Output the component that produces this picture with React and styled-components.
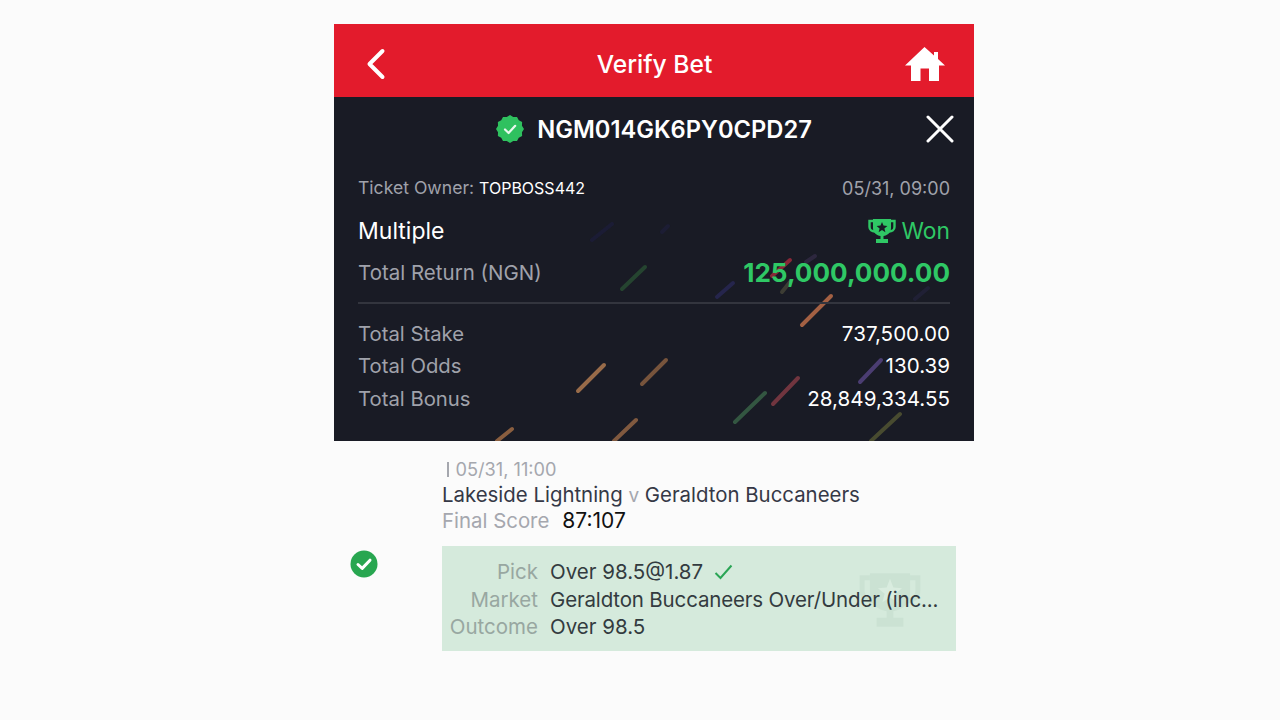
import styled, { createGlobalStyle } from 'styled-components';

const GlobalStyle = createGlobalStyle`
  html, body {
    margin: 0;
    height: 100%;
    background: #fbfbfb;
    font-family: Inter, "Liberation Sans", sans-serif;
  }
`;

const Page = styled.div`
  width: 640px;
  margin-left: 334px;
  padding-top: 24px;
`;

const TopBar = styled.header`
  height: 73px;
  box-sizing: border-box;
  background: #e31b2c;
  display: flex;
  align-items: center;
  justify-content: space-between;
  padding: 7px 29px 0 30px;
  color: #fff;
`;

const TopTitle = styled.h1`
  margin: 0;
  font-size: 24.6px;
  font-weight: 500;
`;

const IconSlot = styled.div`
  width: 42px;
  display: flex;
  justify-content: ${p => p.$end ? 'flex-end' : 'flex-start'};
`;

const Panel = styled.section`
  position: relative;
  overflow: hidden;
  height: 344px;
  background: #191b25;
  box-sizing: border-box;
  padding: 0 24px;
  color: #fff;
`;

const Streaks = styled.svg`
  position: absolute;
  left: 0;
  top: 0;
  filter: blur(0.7px);
`;

const PanelBody = styled.div`
  position: relative;
`;

const CodeRow = styled.div`
  height: 66px;
  box-sizing: border-box;
  padding-bottom: 2px;
  display: flex;
  align-items: center;
  justify-content: center;
  gap: 13px;
  font-size: 23.7px;
  font-weight: 600;
`;

const CloseBtn = styled.div`
  position: absolute;
  right: -4px;
  top: 18px;
`;

const Row = styled.div`
  display: flex;
  justify-content: space-between;
  align-items: center;
  height: ${p => p.$h || 32.5}px;
`;

const OwnerLine = styled.span`
  display: flex;
  align-items: baseline;
  gap: 5px;
  margin-top: -1px;
`;

const Muted = styled.span`
  color: #a0a2ab;
  font-size: ${p => p.$size || 20.3}px;
`;

const Value = styled.span`
  color: #fff;
  font-size: ${p => p.$size || 20.6}px;
`;

const Won = styled.span`
  display: flex;
  align-items: center;
  gap: 6px;
  color: #2fc865;
  font-size: 22.8px;
  margin-top: -1px;
`;

const BigAmount = styled.span`
  color: #2fc865;
  font-size: 26.1px;
  font-weight: 700;
`;

const Divider = styled.div`
  height: 2px;
  background: #33353e;
  margin: 7px 0 13px;
`;

const BetRow = styled.div`
  display: flex;
  padding: 18px 18px 0 16px;
`;

const StatusCol = styled.div`
  width: 92px;
  padding-top: 91px;
`;

const BetCol = styled.div`
  flex: 1;
  min-width: 0;
`;

const DateLine = styled.div`
  color: #a5a7ae;
  font-size: 18.2px;
  line-height: 21px;
  padding-left: 5px;
  display: flex;
  align-items: center;
  gap: 7px;
`;

const DateBar = styled.span`
  width: 1.5px;
  height: 15px;
  background: #a5a7ae;
`;

const Teams = styled.div`
  color: #353846;
  font-size: 20.4px;
  line-height: 29px;
  white-space: nowrap;
`;

const Versus = styled.span`
  color: #a5a7ae;
  font-size: 19px;
`;

const ScoreLine = styled.div`
  display: flex;
  gap: 13px;
  font-size: 20.4px;
  line-height: 21px;
  margin-bottom: 15px;
`;

const ScoreLabel = styled.span`
  color: #a5a7ae;
`;

const Score = styled.span`
  color: #111;
  font-size: 21px;
`;

const PickBox = styled.div`
  position: relative;
  height: 105px;
  box-sizing: border-box;
  background: #d5eadc;
  padding: 12px 16px 0 0;
  display: grid;
  grid-template-columns: 96px minmax(0, 1fr);
  column-gap: 12px;
  grid-auto-rows: 27.5px;
  align-items: center;
  font-size: 20.5px;
`;

const PickLabel = styled.span`
  color: #98a7a1;
  text-align: right;
`;

const PickValue = styled.span`
  position: relative;
  color: #333b3f;
  display: flex;
  align-items: center;
  gap: 11px;
  white-space: nowrap;
  letter-spacing: ${p => p.$tight ? '-0.16px' : '0'};
`;

const Watermark = styled.svg`
  position: absolute;
  left: 414px;
  top: 25px;
`;

const streaks = [
  [578, 391, 604, 365, '#c98a58', 0.72],
  [642, 384, 666, 360, '#9b6b45', 0.72],
  [497, 441, 512, 429, '#b5794a', 0.72],
  [614, 441, 636, 420, '#a8714a', 0.72],
  [802, 325, 831, 296, '#c2704b', 0.82],
  [735, 422, 765, 393, '#3f6f4d', 0.7],
  [773, 404, 798, 378, '#8f3f48', 0.75],
  [860, 382, 881, 360, '#5c4a8c', 0.75],
  [871, 441, 900, 414, '#5d5f34', 0.7],
  [622, 289, 645, 267, '#2c5a36', 0.65],
  [717, 297, 733, 283, '#2b2a5c', 0.7],
  [782, 292, 790, 282, '#4a4a3a', 0.75],
  [772, 276, 790, 260, '#a52a3c', 0.8],
  [806, 262, 815, 256, '#3a3050', 0.6],
  [592, 240, 612, 224, '#20204a', 0.45],
  [915, 299, 928, 288, '#262444', 0.55],
  [662, 232, 668, 226, '#20204a', 0.4],
];

function BackIcon() {
  return (
    <svg width="22" height="34" viewBox="0 0 22 34">
      <path d="M18.5 4 L5.5 17 L18.5 30" fill="none" stroke="#fff" strokeWidth="4" strokeLinecap="round" strokeLinejoin="round" />
    </svg>
  );
}

function HomeIcon() {
  return (
    <svg width="40" height="36" viewBox="0 0 40 36">
      <path fill="#fff" fillRule="evenodd" d="M19.5 1 L29 9.5 V6 H33 V13 L40 19.5 H34 V35 H24 V22.5 H15.5 V35 H6 V19.5 H0 Z" />
    </svg>
  );
}

function BadgeIcon() {
  const pts = [];
  for (let i = 0; i < 24; i++) {
    const r = i % 2 ? 12.4 : 14;
    const a = (i / 24) * Math.PI * 2;
    pts.push(`${14 + r * Math.cos(a)},${14 + r * Math.sin(a)}`);
  }
  return (
    <svg width="28" height="28" viewBox="0 0 28 28">
      <polygon points={pts.join(' ')} fill="#2fc15f" />
      <path d="M9 14.5 L12.6 18 L19.2 10.8" fill="none" stroke="#e9f8ee" strokeWidth="2.2" strokeLinecap="round" strokeLinejoin="round" />
    </svg>
  );
}

function CloseIcon() {
  return (
    <svg width="28" height="28" viewBox="0 0 28 28">
      <path d="M2 2 L26 26 M26 2 L2 26" stroke="#fff" strokeWidth="3" strokeLinecap="round" />
    </svg>
  );
}

function TrophyIcon() {
  return (
    <svg width="28" height="26" viewBox="0 0 28 26">
      <path fill="none" stroke="#2fc865" strokeWidth="2.4" d="M5 3 H1.5 V9 C1.5 12 4 13.5 7 13.5 M23 3 H26.5 V9 C26.5 12 24 13.5 21 13.5" />
      <path fill="#2fc865" d="M5 1 H23 V10 C23 15 19 17.5 15.5 18 V21 H20 V25 H8 V21 H12.5 V18 C9 17.5 5 15 5 10 Z" />
      <path fill="#191b25" d="M14 4 L15.5 7.6 L19.4 7.9 L16.4 10.4 L17.4 14.2 L14 12.1 L10.6 14.2 L11.6 10.4 L8.6 7.9 L12.5 7.6 Z" />
    </svg>
  );
}

function WatermarkTrophy() {
  return (
    <Watermark width="68" height="58" viewBox="0 0 28 26" aria-hidden="true">
      <path fill="none" stroke="#cbe2d3" strokeWidth="2.2" d="M5 3 H1.5 V9 C1.5 12 4 13.5 7 13.5 M23 3 H26.5 V9 C26.5 12 24 13.5 21 13.5" />
      <path fill="#cbe2d3" d="M5 1 H23 V10 C23 15 19 17.5 15.5 18 V21 H20 V25 H8 V21 H12.5 V18 C9 17.5 5 15 5 10 Z" />
      <path fill="#d9ecdf" d="M14 3.5 L15.5 7.4 L19.4 7.7 L16.4 10.2 L17.4 14 L14 11.9 L10.6 14 L11.6 10.2 L8.6 7.7 L12.5 7.4 Z" />
    </Watermark>
  );
}

function CheckCircle() {
  return (
    <svg width="28" height="28" viewBox="0 0 28 28">
      <circle cx="14" cy="14" r="13.5" fill="#28a650" />
      <path d="M8 14.5 L12.2 18.4 L20 10.2" fill="none" stroke="#fff" strokeWidth="3" strokeLinecap="round" strokeLinejoin="round" />
    </svg>
  );
}

function TinyCheck() {
  return (
    <svg width="19" height="16" viewBox="0 0 19 16">
      <path d="M1.5 9 L6.5 14 L17.5 1.5" fill="none" stroke="#2aa555" strokeWidth="2" />
    </svg>
  );
}

export default function App() {
  return (
    <>
      <GlobalStyle />
      <Page>
        <TopBar>
          <IconSlot><BackIcon /></IconSlot>
          <TopTitle>Verify Bet</TopTitle>
          <IconSlot $end><HomeIcon /></IconSlot>
        </TopBar>
        <Panel>
          <Streaks width="640" height="344" viewBox="334 97 640 344">
            {streaks.map(([x1, y1, x2, y2, c, o], i) => (
              <line key={i} x1={x1} y1={y1} x2={x2} y2={y2} stroke={c} strokeOpacity={o} strokeWidth="4" strokeLinecap="round" />
            ))}
          </Streaks>
          <PanelBody>
            <CodeRow>
              <BadgeIcon />
              <span>NGM014GK6PY0CPD27</span>
            </CodeRow>
            <CloseBtn><CloseIcon /></CloseBtn>
            <Row $h={50}>
              <OwnerLine>
                <Muted $size={17.6}>Ticket Owner:</Muted>
                <Value $size={16}>TOPBOSS442</Value>
              </OwnerLine>
              <Muted $size={18}>05/31, 09:00</Muted>
            </Row>
            <Row $h={36}>
              <Value $size={23}>Multiple</Value>
              <Won><TrophyIcon />Won</Won>
            </Row>
            <Row $h={46}>
              <Muted $size={20.5}>Total Return (NGN)</Muted>
              <BigAmount>125,000,000.00</BigAmount>
            </Row>
            <Divider />
            <Row>
              <Muted>Total Stake</Muted>
              <Value>737,500.00</Value>
            </Row>
            <Row>
              <Muted>Total Odds</Muted>
              <Value>130.39</Value>
            </Row>
            <Row>
              <Muted>Total Bonus</Muted>
              <Value>28,849,334.55</Value>
            </Row>
          </PanelBody>
        </Panel>
        <BetRow>
          <StatusCol><CheckCircle /></StatusCol>
          <BetCol>
            <DateLine><DateBar />05/31, 11:00</DateLine>
            <Teams>Lakeside Lightning <Versus>v</Versus> Geraldton Buccaneers</Teams>
            <ScoreLine>
              <ScoreLabel>Final Score</ScoreLabel>
              <Score>87:107</Score>
            </ScoreLine>
            <PickBox>
              <WatermarkTrophy />
              <PickLabel>Pick</PickLabel>
              <PickValue>Over 98.5@1.87 <TinyCheck /></PickValue>
              <PickLabel>Market</PickLabel>
              <PickValue $tight>Geraldton Buccaneers Over/Under (inc...</PickValue>
              <PickLabel>Outcome</PickLabel>
              <PickValue>Over 98.5</PickValue>
            </PickBox>
          </BetCol>
        </BetRow>
      </Page>
    </>
  );
}
